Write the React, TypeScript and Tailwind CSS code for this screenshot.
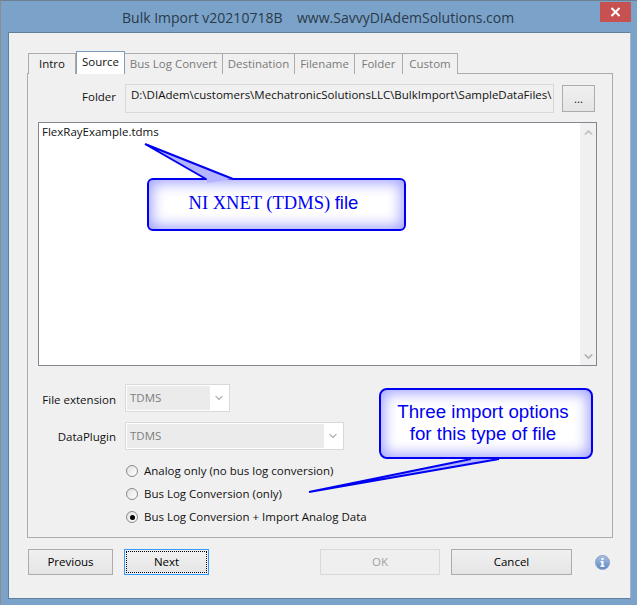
import { ChevronDown, ChevronUp } from "lucide-react";

const tabs = [
  { label: "Intro", width: "w-[48px]", active: false, enabled: true },
  { label: "Source", width: "w-[49px]", active: true, enabled: true },
  { label: "Bus Log Convert", width: "w-[98px]", active: false, enabled: false },
  { label: "Destination", width: "w-[72px]", active: false, enabled: false },
  { label: "Filename", width: "w-[60px]", active: false, enabled: false },
  { label: "Folder", width: "w-[48px]", active: false, enabled: false },
  { label: "Custom", width: "w-[55px]", active: false, enabled: false },
];

const radios = [
  { label: "Analog only (no bus log conversion)", checked: false },
  { label: "Bus Log Conversion (only)", checked: false },
  { label: "Bus Log Conversion + Import Analog Data", checked: true },
];

function Combo({ width, value }: { width: string; value: string }) {
  return (
    <div className={`flex h-[28px] ${width} items-stretch border border-[#d9d9d9] bg-white p-[1px]`}>
      <div className="flex flex-1 items-center bg-[#ebebeb] pl-[3px] text-[#7d7d7d]">{value}</div>
      <div className="flex w-[18px] items-center justify-center">
        <ChevronDown size={12} strokeWidth={2.5} className="text-[#b4b4b4]" />
      </div>
    </div>
  );
}

function DialogButton({ label, width, disabled, focused }: { label: string; width: string; disabled?: boolean; focused?: boolean }) {
  if (focused) {
    return (
      <div className={`flex h-[26px] ${width} border border-[#3399ff] bg-[#f0f0f0] p-[1px]`}>
        <div className="flex flex-1 items-center justify-center border border-dotted border-black bg-gradient-to-b from-[#f0f0f0] to-[#e6e6e6] text-black">{label}</div>
      </div>
    );
  }
  return (
    <div
      className={`flex h-[26px] ${width} items-center justify-center border ${
        disabled ? "border-[#d9d9d9] bg-[#efefef] text-[#a3a3a3]" : "border-[#acacac] bg-gradient-to-b from-[#f0f0f0] to-[#e5e5e5] text-black"
      }`}
    >
      {label}
    </div>
  );
}

export default function App() {
  return (
    <div className="relative flex h-[605px] w-[637px] flex-col overflow-hidden border-l border-t border-l-[#8c8c8c] border-t-[#6d7f90] bg-[#7ba2c9] pl-[7px] text-[11.5px] leading-[16px] text-[#1a1a1a] [font-family:'Open_Sans','Noto_Sans',sans-serif]">
      {/* title bar */}
      <div className="flex h-[31px] shrink-0 items-start">
        <div className="flex-1 pl-[114px] pt-[7px] text-[14px] leading-[20px] whitespace-pre text-[#2a3a4a]">
          {"Bulk Import v20210718B    www.SavvyDIAdemSolutions.com"}
        </div>
        <div className="mt-[1px] mr-[6px] flex h-[20px] w-[31px] items-center justify-center bg-[#c75050]">
          <svg width="11" height="10" viewBox="0 0 11 10" fill="none" stroke="white" strokeWidth="2">
            <path d="M1.5 1l8 8M9.5 1l-8 8" />
          </svg>
        </div>
      </div>

      {/* client area */}
      <div className="mr-[6px] mb-[6px] flex flex-1 flex-col border border-[#5f7f9f] border-r-[#9fb5cb] bg-[#f0f0f0] pl-[18px] pr-[17px] pt-[19px]">
        {/* tabs */}
        <div className="relative z-10 -mb-[1px] flex h-[22px] items-end pl-[1px]">
          {tabs.map((tab) =>
            tab.active ? (
              <div
                key={tab.label}
                className={`flex h-[23px] ${tab.width} items-start justify-center border border-b-0 border-[#7f9db9] bg-white pt-[2px] text-[#111]`}
              >
                {tab.label}
              </div>
            ) : (
              <div
                key={tab.label}
                className={`flex h-[21px] ${tab.width} items-center justify-center border border-l-0 border-b-0 border-[#acacac] first:border-l bg-[#f0f0f0] ${
                  tab.enabled ? "text-[#111]" : "text-[#7a7a7a]"
                }`}
              >
                {tab.label}
              </div>
            ),
          )}
        </div>

        {/* tab panel */}
        <div className="flex h-[465px] flex-col border border-[#acacac] pl-[10px] pr-[15px] pt-[10px]">
          <div className="flex items-start">
            <div className="w-[78px] pt-[5px] text-right text-[#111]">Folder</div>
            <div className="ml-[9px] h-[29px] w-[429px] overflow-hidden border border-[#d9d9d9] bg-[#f0f0f0] pl-[5px] pt-[2px] whitespace-nowrap text-[#111]">
              {"D:\\DIAdem\\customers\\MechatronicSolutionsLLC\\BulkImport\\SampleDataFiles\\"}
            </div>
            <div className="ml-[8px] mt-[1px] flex h-[27px] w-[33px] items-center justify-center border border-[#acacac] bg-gradient-to-b from-[#f0f0f0] to-[#e5e5e5] text-[#111]">
              ...
            </div>
          </div>

          {/* file list */}
          <div className="mt-[9px] flex h-[244px] w-[559px] border border-[#828790] bg-white">
            <div className="flex-1 pl-[3px] pt-[1px] text-[#111]">FlexRayExample.tdms</div>
            <div className="flex w-[16px] flex-col items-center justify-between bg-[#f0f0f0] pt-[3px] pb-[2px]">
              <ChevronUp size={13} strokeWidth={3} className="text-[#c4c4c4]" />
              <ChevronDown size={13} strokeWidth={3} className="text-[#b4b4b4]" />
            </div>
          </div>

          <div className="mt-[18px] flex items-center">
            <div className="w-[78px] pt-[3px] text-right text-[#111]">File extension</div>
            <div className="ml-[9px]">
              <Combo width="w-[105px]" value="TDMS" />
            </div>
          </div>
          <div className="mt-[10px] flex items-center">
            <div className="w-[78px] pt-[1px] text-right text-[#111]">DataPlugin</div>
            <div className="ml-[9px]">
              <Combo width="w-[219px]" value="TDMS" />
            </div>
          </div>

          <div className="mt-[13px] flex flex-col gap-[7px] pl-[88px]">
            {radios.map((radio) => (
              <div key={radio.label} className="flex items-center gap-[6px] text-[#111]">
                <div className="flex h-[12px] w-[12px] items-center justify-center rounded-full border border-[#8a8a8a] bg-gradient-to-br from-[#e0e0e0] to-white">
                  {radio.checked && <div className="h-[5px] w-[5px] rounded-full bg-black" />}
                </div>
                <span>{radio.label}</span>
              </div>
            ))}
          </div>
        </div>

        {/* bottom buttons */}
        <div className="mt-[11px] flex items-center pl-[1px] text-[#111]">
          <DialogButton label="Previous" width="w-[85px]" />
          <div className="ml-[11px]">
            <DialogButton label="Next" width="w-[85px]" focused />
          </div>
          <div className="ml-[111px]">
            <DialogButton label="OK" width="w-[120px]" disabled />
          </div>
          <div className="ml-[11px]">
            <DialogButton label="Cancel" width="w-[121px]" />
          </div>
          <div className="ml-[23px] flex h-[15px] w-[15px] items-center justify-center rounded-full border border-[#7f9fc9] bg-gradient-to-b from-[#a9c1e3] to-[#5f88c4]">
            <svg width="7" height="9" viewBox="0 0 7 9" fill="white">
              <rect x="2.5" y="0" width="2" height="2" />
              <path d="M1.5 3h3v4.5h1V9h-4V7.5h1V4.5h-1z" />
            </svg>
          </div>
        </div>
      </div>

      {/* callout: file type */}
      <div className="absolute left-[146px] top-[177px] flex h-[53px] w-[259px] items-center justify-center rounded-[6px] border-2 border-[#0000f0] bg-white pb-[4px] pr-[6px] text-[#0000f0] shadow-[inset_0_0_14px_3px_#a0a0ff] [font-family:'Liberation_Serif',serif]">
        <span className="text-[18.5px] leading-[22px]">
          NI XNET (TDMS) <span className="[font-family:'Liberation_Sans',sans-serif]">file</span>
        </span>
      </div>
      <svg className="absolute left-[140px] top-[140px]" width="100" height="44" viewBox="0 0 100 44">
        <path d="M4 3 L66 38 L92 38" fill="#b4b4ff" stroke="none" />
        <path d="M4 3 L65 38 M4 3 L92 38" fill="none" stroke="#0000f0" strokeWidth="2" />
        <path d="M66 38 L92 38 L66 42z" fill="#b4b4ff" />
      </svg>

      {/* callout: import options */}
      <div className="absolute left-[378px] top-[387px] flex h-[71px] w-[214px] flex-col items-center justify-center rounded-[8px] border-2 border-[#0000f0] bg-white pb-[1px] pr-[6px] text-[18.7px] leading-[22px] text-[#0000f0] shadow-[inset_0_0_14px_3px_#a0a0ff] [font-family:'Liberation_Sans',sans-serif]">
        <span>Three import options</span>
        <span>for this type of file</span>
      </div>
      <svg className="absolute left-[300px] top-[452px]" width="210" height="44" viewBox="0 0 210 44">
        <path d="M8 39 L170 6 L198 6z" fill="#b4b4ff" />
        <path d="M8 39 L170 6 M8 39 L198 6" fill="none" stroke="#0000f0" strokeWidth="2" />
      </svg>
    </div>
  );
}
